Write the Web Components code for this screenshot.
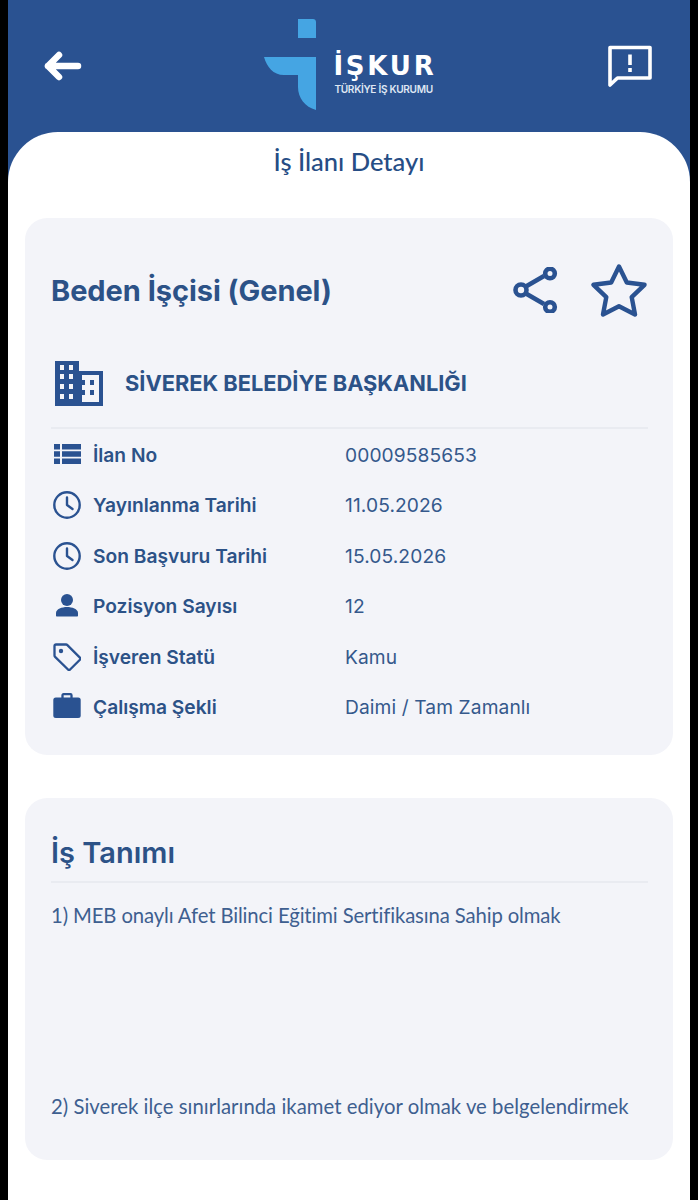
<!DOCTYPE html>
<html lang="tr">
<head>
<meta charset="utf-8">
<title>İş İlanı Detayı</title>
<style>
  html, body { margin: 0; background: #000; }
  body { padding: 0 8px; height: 1200px; overflow: hidden; font-family: "Inter", "Liberation Sans", sans-serif; color: #2c5287; }
</style>
</head>
<body>
<job-page>
  <job-header></job-header>
  <job-panel heading="İş İlanı Detayı">
    <job-summary title-text="Beden İşçisi (Genel)" company="SİVEREK BELEDİYE BAŞKANLIĞI">
      <info-row icon="list" label="İlan No" value="00009585653"></info-row>
      <info-row icon="clock" label="Yayınlanma Tarihi" value="11.05.2026"></info-row>
      <info-row icon="clock" label="Son Başvuru Tarihi" value="15.05.2026"></info-row>
      <info-row icon="person" label="Pozisyon Sayısı" value="12"></info-row>
      <info-row icon="tag" label="İşveren Statü" value="Kamu"></info-row>
      <info-row icon="case" label="Çalışma Şekli" value="Daimi / Tam Zamanlı"></info-row>
    </job-summary>
    <job-description heading="İş Tanımı">
      <p>1) MEB onaylı Afet Bilinci Eğitimi Sertifikasına Sahip olmak</p>
      <p>2) Siverek ilçe sınırlarında ikamet ediyor olmak ve belgelendirmek</p>
    </job-description>
  </job-panel>
</job-page>

<script>
const ICONS = {
  list: '<path fill="currentColor" d="M1 3h6v5.500H1zM9 3h19v5.500H9zM1 10.300h6v5.500H1zM9 10.300h19v5.500H9zM1 17.500h6V23H1zM9 17.500h19V23H9z"/>',
  clock: '<circle cx="14" cy="14" r="12.700" fill="none" stroke="currentColor" stroke-width="2.400"/><path d="M14 6.500V14l5.500 4" fill="none" stroke="currentColor" stroke-width="2.400" stroke-linecap="round" stroke-linejoin="round"/>',
  person: '<circle cx="14" cy="8" r="6" fill="currentColor"/><path fill="currentColor" d="M3 23.500V21c0-4 6-6 11-6s11 2 11 6v2.500c0 .6-.4 1-1 1H4c-.6 0-1-.4-1-1z"/>',
  tag: '<path fill="none" stroke="currentColor" stroke-width="2.300" stroke-linejoin="round" d="M1.500 3c0-.9.6-1.500 1.500-1.500h10c.6 0 1 .2 1.400.6l12.500 12.500c.6.6.6 1.500 0 2.100l-9.800 9.800c-.6.6-1.500.6-2.100 0L2.100 13.900c-.4-.4-.6-.9-.6-1.400z"/><circle cx="8" cy="8" r="2.200" fill="currentColor"/>',
  case: '<path fill="none" stroke="currentColor" stroke-width="2.300" d="M9.500 5V2.200c0-.6.4-1 1-1h7c.6 0 1 .4 1 1V5"/><rect x="0.300" y="4.500" width="27.400" height="20.500" rx="2.500" fill="currentColor"/>'
};

class AppIcon extends HTMLElement {
  constructor() {
    super();
    this.attachShadow({ mode: 'open' });
  }

  connectedCallback() {
    this.shadowRoot.innerHTML = `
      <style>
        :host { display: inline-flex; width: 28px; height: 28px; flex: none; }
        svg { width: 100%; height: 100%; display: block; }
      </style>
      <svg viewBox="0 0 28 28" aria-hidden="true">${ICONS[this.getAttribute('name')] || ''}</svg>`;
  }
}
customElements.define('app-icon', AppIcon);

class JobPage extends HTMLElement {
  constructor() {
    super();
    this.attachShadow({ mode: 'open' }).innerHTML = `
      <style>
        :host {
          display: flex;
          flex-direction: column;
          height: 1200px;
          background: linear-gradient(#2a5291 200px, #fff 200px);
        }
      </style>
      <slot></slot>`;
  }
}
customElements.define('job-page', JobPage);

class JobHeader extends HTMLElement {
  constructor() {
    super();
    this.attachShadow({ mode: 'open' }).innerHTML = `
      <style>
        :host { display: grid; grid-template-columns: 46px 1fr 46px; height: 132px; color: #fff; box-sizing: border-box; padding: 0 37px 0 34px; }
        .back { margin-top: 50px; width: 42px; height: 32px; }
        svg { display: block; }
        .logo { display: flex; align-items: flex-start; justify-content: center; margin-top: 19px; padding-left: 5px; }
        .mark { width: 53px; height: 92px; flex: none; }
        .words { display: flex; flex-direction: column; margin: 33px 0 0 17px; }
        .name { font: 700 26px/28px "DejaVu Sans", "Liberation Sans", sans-serif; letter-spacing: 2.800px; white-space: nowrap; }
        .sub { font: 600 10.100px/12px "Inter", "Liberation Sans", sans-serif; margin: 3px 0 0 1px; color: #dfe7f3; white-space: nowrap; letter-spacing: -0.3px; }
        .report { width: 46px; height: 46px; margin-top: 44px; }
      </style>
      <div class="back">
        <svg viewBox="0 0 42 32" width="42" height="32" aria-hidden="true">
          <path d="M36 16H6M17 5L6 16l11 11" fill="none" stroke="#fff" stroke-width="6.500" stroke-linecap="round" stroke-linejoin="round"/>
        </svg>
      </div>
      <div class="logo">
        <svg class="mark" viewBox="0 0 53 92" aria-hidden="true">
          <path fill="#45a5e3" d="M35 0h15c1.700 0 3 1.300 3 3v16H35z"/>
          <path fill="#45a5e3" d="M1 38h52v53C42 88 35 79 35 68V56H21C10 56 4 48 1 38z"/>
        </svg>
        <div class="words">
          <span class="name">İŞKUR</span>
          <span class="sub">TÜRKİYE İŞ KURUMU</span>
        </div>
      </div>
      <div class="report">
        <svg viewBox="0 0 46 46" width="46" height="46" aria-hidden="true">
          <path d="M3 3.500h40V34H10.500L3 41z" fill="none" stroke="#fff" stroke-width="3.600" stroke-linejoin="round"/>
          <path d="M21.200 10.500h3.600v10.500h-3.600zM21.200 24h3.600v4h-3.600z" fill="#fff"/>
        </svg>
      </div>`;
  }
}
customElements.define('job-header', JobHeader);

class JobPanel extends HTMLElement {
  constructor() {
    super();
    this.attachShadow({ mode: 'open' }).innerHTML = `
      <style>
        :host { display: block; flex: 1; background: #fff; border-radius: 50px 50px 0 0; padding: 0 17px; }
        h1 {
          margin: 0;
          padding-top: 11px;
          height: 86px;
          box-sizing: border-box;
          text-align: center;
          font: 500 25.500px/36px "Lato", "Liberation Sans", sans-serif;
          color: #264d85;
        }
        .cards { display: flex; flex-direction: column; gap: 43px; }
      </style>
      <h1></h1>
      <div class="cards"><slot></slot></div>`;
  }

  connectedCallback() {
    this.shadowRoot.querySelector('h1').textContent = this.getAttribute('heading');
  }
}
customElements.define('job-panel', JobPanel);

class JobSummary extends HTMLElement {
  constructor() {
    super();
    this.attachShadow({ mode: 'open' }).innerHTML = `
      <style>
        :host { display: block; background: #f3f4f9; border-radius: 22px; height: 537px; box-sizing: border-box; padding: 0 25px 0 26px; }
        .top { display: flex; align-items: center; justify-content: space-between; height: 132px; box-sizing: border-box; padding-top: 14px; }
        h2 { margin: 0; font-size: 29px; line-height: 34px; font-weight: 700; color: #2c5287; letter-spacing: -0.05px; white-space: nowrap; }
        .actions { display: flex; align-items: center; gap: 32px; margin: -3px 1px 0 0; }
        .actions svg { display: block; }
        .company { display: flex; align-items: center; gap: 21px; height: 79px; padding: 0 0 12px 3px; border-bottom: 2px solid #e9ebf1; box-sizing: border-box; }
        .company svg { display: block; width: 50px; height: 46px; flex: none; }
        .company span { font-size: 21.800px; font-weight: 700; color: #2c5287; white-space: nowrap; }
        .rows { display: flex; flex-direction: column; padding-top: 0.500px; }
      </style>
      <div class="top">
        <h2></h2>
        <div class="actions">
          <svg width="46" height="46" viewBox="0 0 46 46" aria-hidden="true">
            <g fill="none" stroke="#2a5291" stroke-width="4.600">
              <path d="M12 20L31 9M12 26l19 11"/>
              <circle cx="8" cy="23" r="5.500"/>
              <circle cx="37" cy="6.500" r="4.800"/>
              <circle cx="37" cy="40" r="4.800"/>
            </g>
          </svg>
          <svg width="56" height="54" viewBox="0 0 56 54" aria-hidden="true">
            <path d="M28 3.500l7.800 16 17.700 2.300-12.800 12.300 3.300 17.400L28 43.200 12 51.500l3.300-17.400L2.500 21.800l17.700-2.300z" fill="none" stroke="#2a5291" stroke-width="4.400" stroke-linejoin="round"/>
          </svg>
        </div>
      </div>
      <div class="company">
        <svg viewBox="0 0 50 46" aria-hidden="true">
          <path fill="#2a5291" fill-rule="evenodd" d="M1 1h24v10h24v35H1zM6 5v5h4V5zM15 5v5h4V5zM6 14v5h4v-5zM15 14v5h4v-5zM6 24v5h4v-5zM15 24v5h4v-5zM6 34v5h4v-5zM15 34v5h4v-5zM25 15v27h20V15zM36 20v5h4v-5zM36 30v5h4v-5z"/>
          <path fill="#2a5291" d="M25 15h3v27h-3zM28 20h3v5h-3zM28 30h3v5h-3z"/>
        </svg>
        <span></span>
      </div>
      <div class="rows"><slot></slot></div>`;
  }

  connectedCallback() {
    this.shadowRoot.querySelector('h2').textContent = this.getAttribute('title-text');
    this.shadowRoot.querySelector('.company span').textContent = this.getAttribute('company');
  }
}
customElements.define('job-summary', JobSummary);

class InfoRow extends HTMLElement {
  constructor() {
    super();
    this.attachShadow({ mode: 'open' });
  }

  connectedCallback() {
    this.shadowRoot.innerHTML = `
      <style>
        :host { display: grid; grid-template-columns: 42px 252px 1fr; align-items: center; height: 50.500px; font-size: 19.200px; color: #2c5287; }
        .label { font-weight: 600; white-space: nowrap; }
        .value { font-weight: 400; white-space: nowrap; letter-spacing: 0.1px; color: #35598c; }
        app-icon { color: #2a5291; margin-left: 2px; }
      </style>
      <app-icon name="${this.getAttribute('icon')}"></app-icon>
      <span class="label"></span>
      <span class="value"></span>`;
    this.shadowRoot.querySelector('.label').textContent = this.getAttribute('label');
    this.shadowRoot.querySelector('.value').textContent = this.getAttribute('value');
  }
}
customElements.define('info-row', InfoRow);

class JobDescription extends HTMLElement {
  constructor() {
    super();
    this.attachShadow({ mode: 'open' }).innerHTML = `
      <style>
        :host { display: block; background: #f3f4f9; border-radius: 22px; height: 362px; box-sizing: border-box; padding: 0 25px 0 26px; }
        h2 { margin: 0; height: 85px; box-sizing: border-box; padding-top: 35px; font-size: 29px; line-height: 40px; font-weight: 600; color: #2c5287; border-bottom: 2px solid #e9ebf1; }
        .body { display: flex; flex-direction: column; gap: 167px; padding-top: 20px; font: 400 20.300px/24px "Lato", "Liberation Sans", sans-serif; color: #3e5f90; }
        ::slotted(p) { margin: 0; white-space: nowrap; letter-spacing: 0.03px; }
        ::slotted(p:first-child) { letter-spacing: -0.12px; }
      </style>
      <h2></h2>
      <div class="body"><slot></slot></div>`;
  }

  connectedCallback() {
    this.shadowRoot.querySelector('h2').textContent = this.getAttribute('heading');
  }
}
customElements.define('job-description', JobDescription);
</script>
</body>
</html>
